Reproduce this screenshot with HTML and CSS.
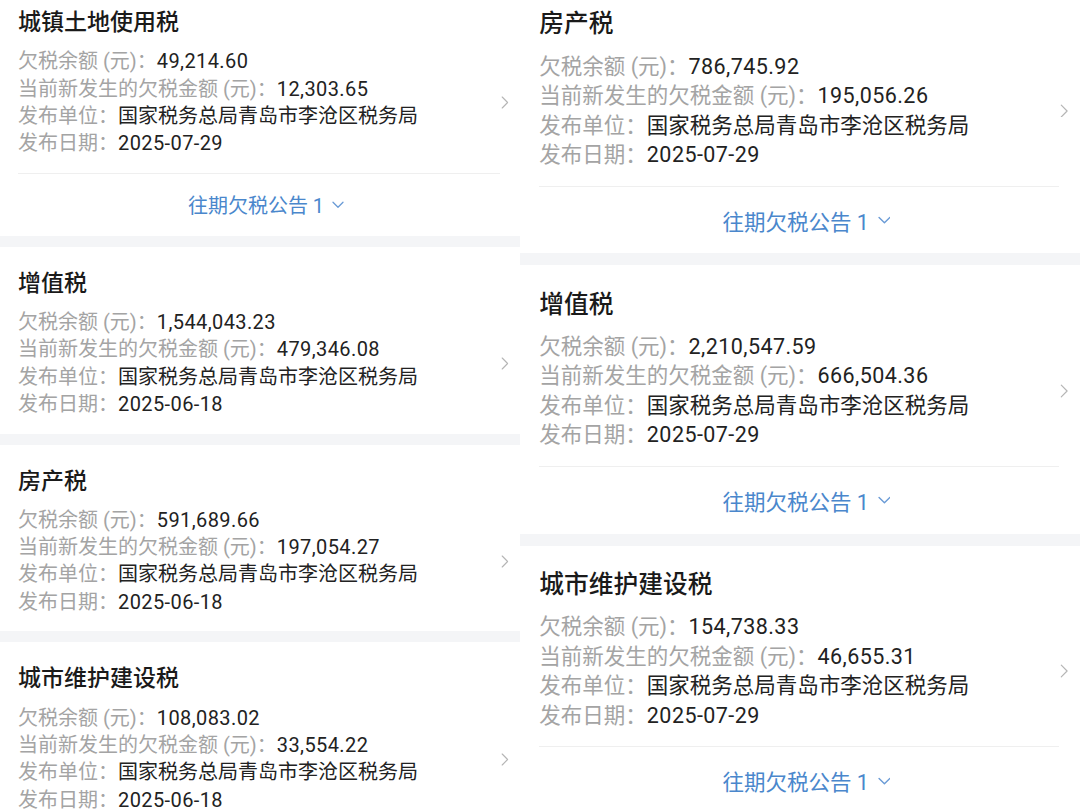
FILE: index.html
```html
<!DOCTYPE html>
<html lang="zh-CN">
<head>
<meta charset="utf-8">
<title>欠税公告</title>
<link rel="stylesheet" href="styles.css">
</head>
<body>
<div class="page">
  <section class="panel panel-left">
    <article class="card">
      <h2 class="card-title">城镇土地使用税</h2>
      <div class="card-body">
        <div class="rows">
          <div class="row"><span class="label">欠税余额 (元)：</span><span class="value num">49,214.60</span></div>
          <div class="row"><span class="label">当前新发生的欠税金额 (元)：</span><span class="value num">12,303.65</span></div>
          <div class="row"><span class="label">发布单位：</span><span class="value">国家税务总局青岛市李沧区税务局</span></div>
          <div class="row"><span class="label">发布日期：</span><span class="value num">2025-07-29</span></div>
        </div>
        <svg class="chev" viewBox="0 0 8 13" aria-hidden="true"><path d="M1.2 1 L6.6 6.5 L1.2 12"/></svg>
      </div>
      <div class="history"><span>往期欠税公告 1</span><svg class="down" viewBox="0 0 12 7" aria-hidden="true"><path d="M1 1 L6 6 L11 1"/></svg></div>
    </article>
    <div class="band"></div>
    <article class="card">
      <h2 class="card-title">增值税</h2>
      <div class="card-body">
        <div class="rows">
          <div class="row"><span class="label">欠税余额 (元)：</span><span class="value num">1,544,043.23</span></div>
          <div class="row"><span class="label">当前新发生的欠税金额 (元)：</span><span class="value num">479,346.08</span></div>
          <div class="row"><span class="label">发布单位：</span><span class="value">国家税务总局青岛市李沧区税务局</span></div>
          <div class="row"><span class="label">发布日期：</span><span class="value num">2025-06-18</span></div>
        </div>
        <svg class="chev" viewBox="0 0 8 13" aria-hidden="true"><path d="M1.2 1 L6.6 6.5 L1.2 12"/></svg>
      </div>
    </article>
    <div class="band"></div>
    <article class="card">
      <h2 class="card-title">房产税</h2>
      <div class="card-body">
        <div class="rows">
          <div class="row"><span class="label">欠税余额 (元)：</span><span class="value num">591,689.66</span></div>
          <div class="row"><span class="label">当前新发生的欠税金额 (元)：</span><span class="value num">197,054.27</span></div>
          <div class="row"><span class="label">发布单位：</span><span class="value">国家税务总局青岛市李沧区税务局</span></div>
          <div class="row"><span class="label">发布日期：</span><span class="value num">2025-06-18</span></div>
        </div>
        <svg class="chev" viewBox="0 0 8 13" aria-hidden="true"><path d="M1.2 1 L6.6 6.5 L1.2 12"/></svg>
      </div>
    </article>
    <div class="band"></div>
    <article class="card">
      <h2 class="card-title">城市维护建设税</h2>
      <div class="card-body">
        <div class="rows">
          <div class="row"><span class="label">欠税余额 (元)：</span><span class="value num">108,083.02</span></div>
          <div class="row"><span class="label">当前新发生的欠税金额 (元)：</span><span class="value num">33,554.22</span></div>
          <div class="row"><span class="label">发布单位：</span><span class="value">国家税务总局青岛市李沧区税务局</span></div>
          <div class="row"><span class="label">发布日期：</span><span class="value num">2025-06-18</span></div>
        </div>
        <svg class="chev" viewBox="0 0 8 13" aria-hidden="true"><path d="M1.2 1 L6.6 6.5 L1.2 12"/></svg>
      </div>
    </article>
  </section>

  <section class="panel panel-right">
    <article class="card">
      <h2 class="card-title">房产税</h2>
      <div class="card-body">
        <div class="rows">
          <div class="row"><span class="label">欠税余额 (元)：</span><span class="value num">786,745.92</span></div>
          <div class="row"><span class="label">当前新发生的欠税金额 (元)：</span><span class="value num">195,056.26</span></div>
          <div class="row"><span class="label">发布单位：</span><span class="value">国家税务总局青岛市李沧区税务局</span></div>
          <div class="row"><span class="label">发布日期：</span><span class="value num">2025-07-29</span></div>
        </div>
        <svg class="chev" viewBox="0 0 8 13" aria-hidden="true"><path d="M1.2 1 L6.6 6.5 L1.2 12"/></svg>
      </div>
      <div class="history"><span>往期欠税公告 1</span><svg class="down" viewBox="0 0 12 7" aria-hidden="true"><path d="M1 1 L6 6 L11 1"/></svg></div>
    </article>
    <div class="band"></div>
    <article class="card">
      <h2 class="card-title">增值税</h2>
      <div class="card-body">
        <div class="rows">
          <div class="row"><span class="label">欠税余额 (元)：</span><span class="value num">2,210,547.59</span></div>
          <div class="row"><span class="label">当前新发生的欠税金额 (元)：</span><span class="value num">666,504.36</span></div>
          <div class="row"><span class="label">发布单位：</span><span class="value">国家税务总局青岛市李沧区税务局</span></div>
          <div class="row"><span class="label">发布日期：</span><span class="value num">2025-07-29</span></div>
        </div>
        <svg class="chev" viewBox="0 0 8 13" aria-hidden="true"><path d="M1.2 1 L6.6 6.5 L1.2 12"/></svg>
      </div>
      <div class="history"><span>往期欠税公告 1</span><svg class="down" viewBox="0 0 12 7" aria-hidden="true"><path d="M1 1 L6 6 L11 1"/></svg></div>
    </article>
    <div class="band"></div>
    <article class="card">
      <h2 class="card-title">城市维护建设税</h2>
      <div class="card-body">
        <div class="rows">
          <div class="row"><span class="label">欠税余额 (元)：</span><span class="value num">154,738.33</span></div>
          <div class="row"><span class="label">当前新发生的欠税金额 (元)：</span><span class="value num">46,655.31</span></div>
          <div class="row"><span class="label">发布单位：</span><span class="value">国家税务总局青岛市李沧区税务局</span></div>
          <div class="row"><span class="label">发布日期：</span><span class="value num">2025-07-29</span></div>
        </div>
        <svg class="chev" viewBox="0 0 8 13" aria-hidden="true"><path d="M1.2 1 L6.6 6.5 L1.2 12"/></svg>
      </div>
      <div class="history"><span>往期欠税公告 1</span><svg class="down" viewBox="0 0 12 7" aria-hidden="true"><path d="M1 1 L6 6 L11 1"/></svg></div>
    </article>
  </section>
</div>
</body>
</html>
```

FILE: styles.css
```css
* { box-sizing: border-box; }

html, body {
  margin: 0;
  padding: 0;
  background: #ffffff;
}

body {
  width: 1080px;
  height: 809px;
  overflow: hidden;
  font-family: "Roboto", "Noto Sans CJK SC", "Noto Sans", sans-serif;
  color: #222222;
}

.page {
  display: flex;
  align-items: flex-start;
}

.panel {
  flex: none;
  background: #ffffff;
}

.panel-left {
  width: 520px;
  font-size: 20px;
  margin-top: -0.7em;
}

.panel-right {
  width: 560px;
  font-size: 21.5px;
  margin-top: -0.7em;
}

.card {
  padding: 0.9em 1em 0 0.9em;
  background: #ffffff;
}

.card-title {
  margin: 0;
  font-family: "Noto Sans CJK SC", sans-serif;
  font-size: 1.15em;
  line-height: 1.4;
  font-weight: 500;
  color: #1a1a1a;
}

.card-body {
  display: flex;
  align-items: center;
  margin-top: 0.6em;
  padding-bottom: 0.77em;
}

.rows {
  flex: 1;
  min-width: 0;
}

.row {
  white-space: nowrap;
  line-height: 1.366em;
  height: 1.366em;
}

.label {
  color: #a4a4a4;
}

.value {
  color: #222222;
}

.num {
  letter-spacing: 0.02em;
}

.chev {
  flex: none;
  width: 0.4em;
  height: 0.65em;
  margin-right: -0.45em;
  fill: none;
  stroke: #b5b5b5;
  stroke-width: 1.1;
  stroke-linecap: round;
  stroke-linejoin: round;
}

.history {
  border-top: 1px solid #efefef;
  height: 3.15em;
  display: flex;
  align-items: center;
  justify-content: center;
  gap: 0.4em;
  padding-left: 0.7em;
  color: #4a87cc;
}

.down {
  width: 0.6em;
  height: 0.38em;
  fill: none;
  stroke: #6a9bd6;
  stroke-width: 1.3;
  stroke-linecap: round;
  stroke-linejoin: round;
}

.band {
  height: 0.55em;
  background: #f4f5f7;
}
```
